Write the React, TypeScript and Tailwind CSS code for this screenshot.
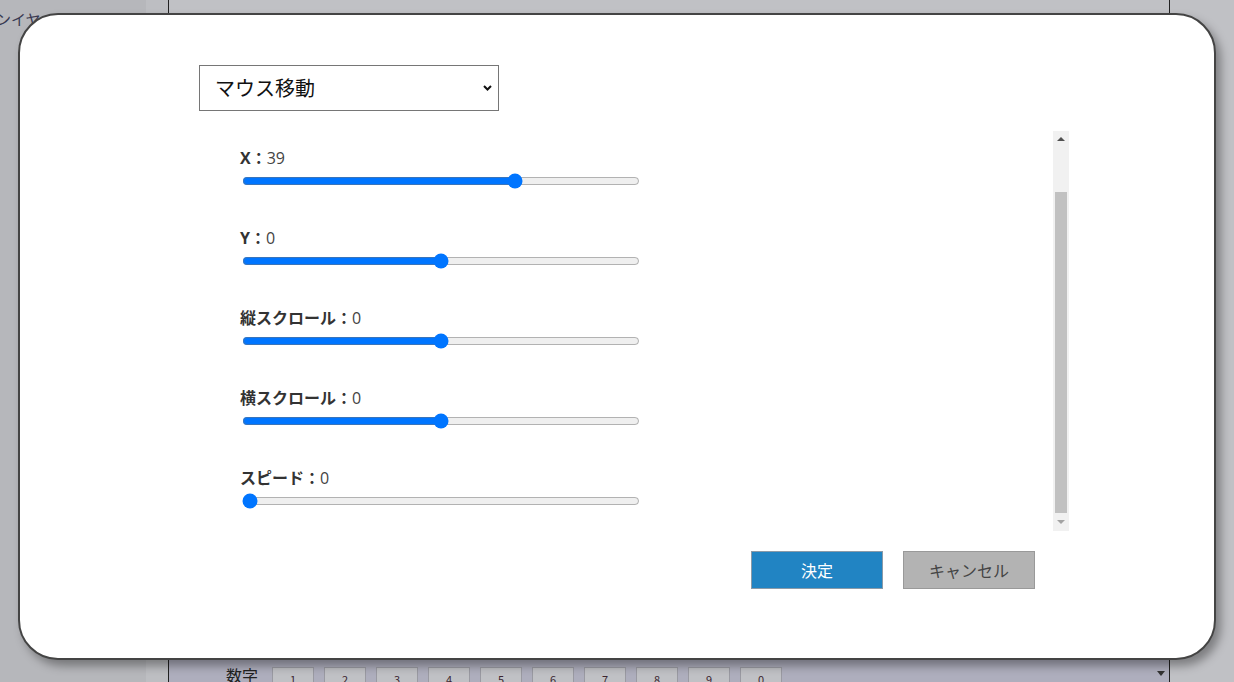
import { useState } from "react";

const FONT = "font-['Noto_Sans_CJK_JP','Noto_Sans',sans-serif]";

type Row = { key: string; label: string; value: number; min: number; max: number };

const ROWS: Row[] = [
  { key: "x", label: "X", value: 39, min: -100, max: 100 },
  { key: "y", label: "Y", value: 0, min: -100, max: 100 },
  { key: "vscroll", label: "縦スクロール", value: 0, min: -10, max: 10 },
  { key: "hscroll", label: "横スクロール", value: 0, min: -10, max: 10 },
  { key: "speed", label: "スピード", value: 0, min: 0, max: 10 },
];

const KEYS = ["1", "2", "3", "4", "5", "6", "7", "8", "9", "0"];

export default function App() {
  const [values, setValues] = useState<Record<string, number>>(
    Object.fromEntries(ROWS.map((r) => [r.key, r.value])),
  );

  return (
    <div className={`relative h-[682px] w-full overflow-hidden bg-[#c0c1c5] ${FONT}`}>
      {/* page behind the dimmed overlay */}
      <div className="flex h-full">
        <div className="w-[146px] shrink-0 bg-[#b6b7bb]">
          <p className="-ml-[4px] pt-[8px] text-[15px] text-[#3a3a52]">ンイヤ</p>
        </div>
        <div className="w-[22px] shrink-0 bg-[#bdbec2]" />
        <div className="flex w-[1002px] shrink-0 flex-col border-x border-[#222]">
          <div className="flex-1" />
          <div className="flex h-[22px] items-start bg-[#aeaebd] pt-[7px]">
            <span className="ml-[57px] mr-[14px] text-[16px] leading-[16px] text-[#222]">数字</span>
            <div className="flex gap-[10px]">
              {KEYS.map((k) => (
                <div
                  key={k}
                  className="flex h-[20px] w-[42px] justify-center border border-[#9a9aa2] bg-[#c0c1c5] pt-[6px] text-[11px] leading-[11px] text-[#3b2530]"
                >
                  {k}
                </div>
              ))}
            </div>
            <div className="flex-1" />
            <span className="mr-[4px] mt-[4px] h-0 w-0 border-x-[4px] border-t-[5px] border-x-transparent border-t-[#333]" />
          </div>
        </div>
        <div className="flex-1 bg-[#c0c1c5]" />
      </div>

      {/* dialog */}
      <div className="absolute left-[18px] top-[13px] h-[647px] w-[1198px] rounded-[40px] border-2 border-[#444] bg-white pl-[179px] pt-[50px] shadow-[5px_6px_10px_rgba(0,0,0,0.35)]">
        <div className="relative h-[46px] w-[300px]">
          <select
            defaultValue="move"
            className="h-full w-full appearance-none border border-[#767676] bg-white pl-[15px] text-[20px] text-[#111] outline-none"
          >
            <option value="move">マウス移動</option>
            <option value="click">マウスクリック</option>
            <option value="key">キー入力</option>
          </select>
          <svg
            className="pointer-events-none absolute right-[7px] top-[20px]"
            width="9"
            height="6"
            viewBox="0 0 9 6"
          >
            <path d="M1 1l3.5 3.5L8 1" fill="none" stroke="#111" strokeWidth="2" />
          </svg>
        </div>

        <div className="relative mt-[20px] h-[400px] w-[870px]">
          <div
            ref={(el) => {
              if (el) el.scrollTop = 61;
            }}
            className="h-full w-full overflow-y-scroll [scrollbar-width:none]"
          >
            <div className="flex flex-col gap-[37px] pb-[29px] pl-[41px] pt-[76px]">
              {ROWS.map((r) => (
                <div key={r.key} className="flex flex-col gap-[3px]">
                  <p className="h-[24px] font-['Open_Sans','Noto_Sans_CJK_JP',sans-serif] text-[16px] leading-[24px] text-[#333]">
                    <span className="font-bold">{r.label}：</span>
                    <span className="text-[#444]">{values[r.key]}</span>
                  </p>
                  <input
                    type="range"
                    min={r.min}
                    max={r.max}
                    value={values[r.key]}
                    onChange={(e) =>
                      setValues((v) => ({ ...v, [r.key]: Number(e.target.value) }))
                    }
                    className="mx-[2px] h-[16px] w-[398px] accent-[#0075ff]"
                  />
                </div>
              ))}
            </div>
          </div>

          {/* scrollbar */}
          <div className="absolute right-0 top-0 flex h-full w-[16px] flex-col items-center bg-[#f1f1f1]">
            <div className="flex h-[16px] w-full items-center justify-center">
              <span className="h-0 w-0 border-x-[4px] border-b-[4px] border-x-transparent border-b-[#505050]" />
            </div>
            <div className="mt-[45px] h-[321px] w-[12px] bg-[#c1c1c1]" />
            <div className="flex h-[18px] w-full items-center justify-center">
              <span className="h-0 w-0 border-x-[4px] border-t-[4px] border-x-transparent border-t-[#a3a3a3]" />
            </div>
          </div>
        </div>

        <div className="mt-[20px] flex w-[870px] justify-end gap-[20px] pr-[34px]">
          <button className="h-[38px] w-[132px] border border-[#8a9aa8] bg-[#2184c3] text-[16px] text-white">
            決定
          </button>
          <button className="h-[38px] w-[132px] border border-[#999] bg-[#b3b3b3] text-[16px] text-[#444]">
            キャンセル
          </button>
        </div>
      </div>
    </div>
  );
}
